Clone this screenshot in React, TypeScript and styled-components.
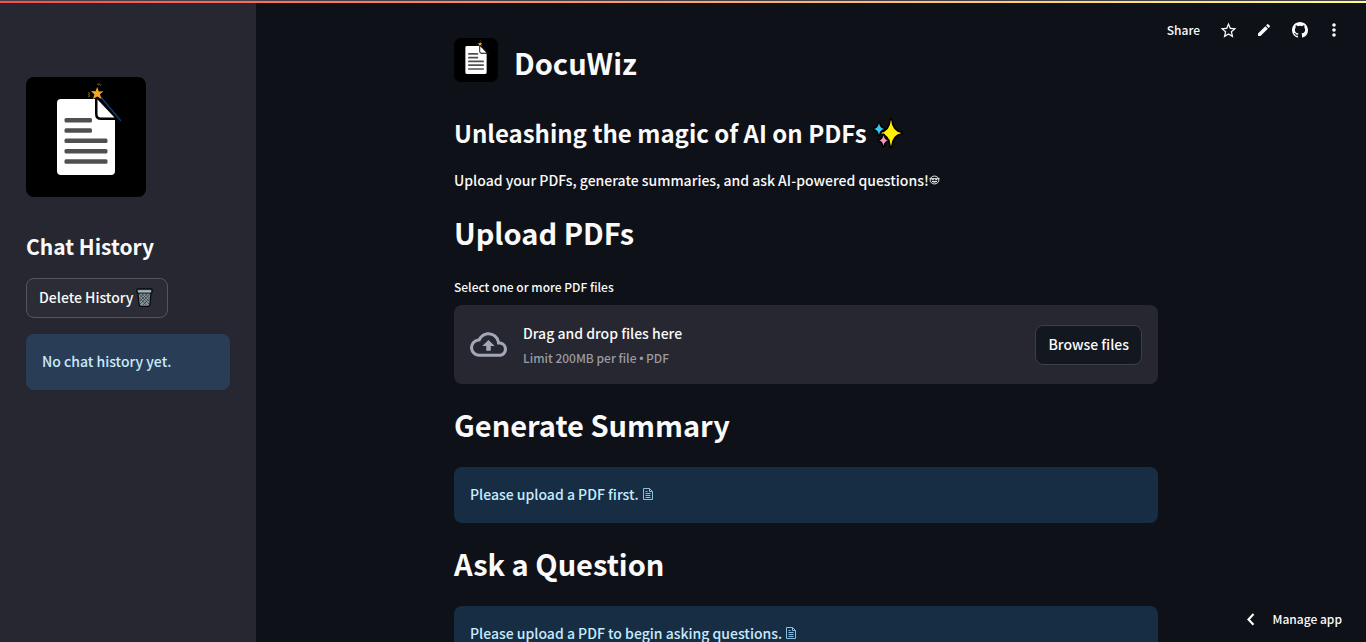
import React from "react";
import styled, { createGlobalStyle } from "styled-components";

const GlobalStyle = createGlobalStyle`
  * { box-sizing: border-box; }
  body {
    margin: 0;
    background: #0e1117;
    color: #fafafa;
    font-family: "Source Sans Pro", "Noto Sans CJK SC", sans-serif;
    font-size: 14px;
    font-weight: 500;
    line-height: 24px;
  }
  h1, h2, p { margin: 0; }
  button { font-family: inherit; font-weight: inherit; color: inherit; cursor: pointer; }
`;

const Page = styled.div`
  position: relative;
  display: flex;
  height: 100vh;
  overflow: hidden;
`;

const Decoration = styled.div`
  position: absolute;
  inset: 0 0 auto;
  height: 3px;
  border-top: 1px solid #40414a;
  background: linear-gradient(90deg, #ff4b4b, #fffd80) padding-box;
  z-index: 2;
`;

const Sidebar = styled.aside`
  flex: none;
  width: 256px;
  padding: 77px 26px 0;
  background: #262730;
`;

const Main = styled.main`
  flex: 1;
  min-width: 0;
  padding: 38px 26px 0 16px;
  overflow: hidden;
`;

const Column = styled.div`
  max-width: 704px;
  margin: 0 auto;
`;

const Logo = styled.svg<{ $size: number }>`
  display: block;
  flex: none;
  width: ${(p) => p.$size}px;
  height: ${(p) => p.$size}px;
`;

const Brand = styled.div`
  display: flex;
  gap: 16px;
`;

const Title = styled.h1`
  padding-bottom: 4px;
  font-size: 29px;
  line-height: 48px;
  font-weight: 700;
`;

const Subtitle = styled.h2`
  display: flex;
  align-items: center;
  gap: 6px;
  margin-top: 22px;
  font-size: 24px;
  line-height: 42px;
  font-weight: 600;
`;

const Section = styled.section`
  margin-top: 16px;
`;

const SidebarTitle = styled.h2`
  margin: 33px 0 16px;
  font-size: 21px;
  line-height: 32px;
  font-weight: 600;
`;

const Intro = styled.p`
  display: flex;
  align-items: center;
  margin-top: 14px;
`;

const Label = styled.label`
  display: block;
  margin-top: 16px;
  font-size: 12px;
  line-height: 22px;
`;

const Button = styled.button<{ $dark?: boolean }>`
  display: flex;
  align-items: center;
  gap: 3px;
  height: 40px;
  padding: 0 12px 2px;
  border: 1px solid ${(p) => (p.$dark ? "#3e4049" : "#54555e")};
  border-radius: 8px;
  background: ${(p) => (p.$dark ? "#131720" : "#2b2c36")};
  font-size: 14px;
  line-height: 24px;
`;

const Alert = styled.div<{ $side?: boolean }>`
  display: flex;
  align-items: center;
  gap: 4px;
  margin-top: ${(p) => (p.$side ? 16 : 15)}px;
  padding: 15px 16px 17px;
  border-radius: 8px;
  background: ${(p) => (p.$side ? "#2a3d56" : "#172d43")};
  color: #c7ebff;
`;

const Dropzone = styled.div`
  display: flex;
  align-items: center;
  margin-top: 7px;
  padding: 14px 16px;
  border-radius: 8px;
  background: #262730;
`;

const DropText = styled.div`
  flex: 1;
  margin-left: 16px;
  padding-top: 2px;
`;

const Hint = styled.div`
  margin-top: 2px;
  color: #9b9ba2;
  font-size: 12px;
  line-height: 22px;
`;

const Bullet = styled.span`
  font-family: "Liberation Sans", sans-serif;
`;

const Toolbar = styled.header`
  position: absolute;
  top: 18px;
  right: 24px;
  display: flex;
  align-items: center;
  gap: 16px;
`;

const ToolButton = styled.button<{ $narrow?: boolean }>`
  display: flex;
  align-items: center;
  justify-content: center;
  min-width: ${(p) => (p.$narrow ? 16 : 20)}px;
  padding: 0;
  border: 0;
  background: none;
  font-size: 12px;
  line-height: 24px;
`;

const ShareButton = styled(ToolButton)`
  padding-right: 2px;
`;

const ManageButton = styled(ToolButton)`
  position: absolute;
  right: 24px;
  bottom: 11px;
  gap: 12px;
`;

const LogoMark = ({ size }: { size: number }) => (
  <Logo $size={size} viewBox="0 0 120 120" role="img" aria-label="DocuWiz">
    <rect width="120" height="120" rx={size > 60 ? 8 : 18} fill="#000" />
    <path d="M35 22h34v15q0 6 6 6h14v51q0 4-4 4H35q-4 0-4-4V26q0-4 4-4Z" fill="#fff" />
    <path d="M71.500 22.500V37q0 3.500 3.500 3.500h13.500Z" fill="#fff" />
    <g fill="#505050">
      <rect x="38.500" y="41" width="27.500" height="4.500" rx="1.500" />
      <rect x="38.500" y="51.300" width="27.500" height="4.500" rx="1.500" />
      <rect x="38.500" y="61.600" width="43" height="4.500" rx="1.500" />
      <rect x="38.500" y="71.900" width="43" height="4.500" rx="1.500" />
      <rect x="38.500" y="82.200" width="43" height="4.500" rx="1.500" />
    </g>
    <path d="m74 19 21 25" stroke="#123f7d" strokeWidth="1.200" />
    <path d="m71.200 10 1.600 4.400 4.700-.2-3.600 3.100 1.600 4.700-4.300-2.600-4.300 2.500 1.500-4.500-3.400-3.300 4.600.1Z" fill="#f9a51f" />
    <path d="m62 15.500 2 1-2 1 2 1.500-2 .8M71 7l1.500 1 .5-1.500 1.500 2 1-1" fill="none" stroke="#8d6c12" strokeWidth=".8" />
  </Logo>
);

const PageIcon = () => (
  <svg width="10" height="12" viewBox="0 0 10 12" fill="none" stroke="#86bfe0" aria-hidden="true">
    <path d="M.5.500h6l3 3v8h-9ZM6.500.500v3h3M2.500 5.500h5M2.500 7.500h5M2.500 9.500h5M2.500 3.500h2" />
  </svg>
);

const TrashIcon = () => (
  <svg width="19" height="19" viewBox="0 0 19 19" aria-hidden="true">
    <path d="M1 1.500 2 1h13l1 .5v3l-1 .8-1.200 11.700-1.300 1.500h-8L3.200 17 2 5.300 1 4.500Z" fill="#84929a" stroke="#08090c" strokeWidth="1.300" />
    <path d="M2.200 3.300h12.600" stroke="#a9b6bc" strokeWidth="1.600" />
    <path d="m3 6 10 10M6 6l7.500 7.500M9.500 6l4 4M3.800 10l6.500 7M14 6 4 16M11 6l-7.200 7.200M7.500 6 3.400 10M13.500 10 7 17" stroke="#39444b" strokeWidth=".8" />
    <path d="M2 5.200h13" stroke="#15191d" />
  </svg>
);

const SparklesIcon = () => (
  <svg width="30" height="30" viewBox="0 0 30 30" stroke="#000" strokeWidth="3.200" strokeLinejoin="round" paintOrder="stroke" aria-hidden="true">
    <path d="M18 1.500q1.200 12 10.500 13.500Q19.200 16.500 18 28.500 16.800 16.500 7.500 15 16.800 13.500 18 1.500Z" fill="#fff000" />
    <path d="M6 5q.8 5 5 6-4.200 1-5 6-.8-5-5-6 4.200-1 5-6Z" fill="#35c9f5" />
    <path d="M10.500 17q.7 4.800 4.500 5.500-3.800.7-4.500 5.500-.7-4.800-4.500-5.500 3.800-.7 4.500-5.500Z" fill="#f59ac0" />
  </svg>
);

const FaceIcon = () => (
  <svg width="11" height="12" viewBox="0 0 12 12" fill="none" stroke="#fafafa" aria-hidden="true">
    <ellipse cx="6" cy="6" rx="4.800" ry="4.300" />
    <path d="M.5 4.500h11M3 5.500h2.200M6.800 5.500H9M3.200 7.500q2.800 1.800 5.600 0Z" />
  </svg>
);

const CloudIcon = () => (
  <svg width="37" height="37" viewBox="0 0 24 24" fill="#a3a8b8" aria-hidden="true">
    <path d="M19.350 10.040A7.490 7.490 0 0 0 12 4C9.110 4 6.600 5.640 5.350 8.040A5.994 5.994 0 0 0 0 14c0 3.310 2.690 6 6 6h13c2.760 0 5-2.240 5-5 0-2.640-2.050-4.780-4.650-4.960ZM19 18H6c-2.210 0-4-1.790-4-4 0-2.050 1.530-3.760 3.560-3.970l1.070-.11.500-.95A5.469 5.469 0 0 1 12 6c2.620 0 4.880 1.860 5.390 4.430l.3 1.500 1.530.11A2.980 2.980 0 0 1 22 15c0 1.650-1.350 3-3 3ZM8 13h2.550v3h2.900v-3H16l-4-4Z" />
  </svg>
);

const StarIcon = () => (
  <svg width="19" height="19" viewBox="0 0 24 24" fill="#fafafa" aria-hidden="true">
    <path d="m22 9.240-7.190-.62L12 2 9.190 8.630 2 9.240l5.460 4.730L5.820 21 12 17.270 18.180 21l-1.630-7.030L22 9.240ZM12 15.400l-3.760 2.270 1-4.280-3.320-2.880 4.380-.38L12 6.100l1.710 4.040 4.380.38-3.320 2.880 1 4.280L12 15.400Z" />
  </svg>
);

const PencilIcon = () => (
  <svg width="16" height="16" viewBox="0 0 24 24" fill="#fafafa" aria-hidden="true">
    <path d="M3 17.250V21h3.750L17.810 9.940l-3.750-3.750L3 17.250ZM20.710 7.040a1 1 0 0 0 0-1.410l-2.340-2.340a1 1 0 0 0-1.410 0l-1.830 1.830 3.750 3.750 1.830-1.830Z" />
  </svg>
);

const GithubIcon = () => (
  <svg width="16" height="16" viewBox="0 0 16 16" fill="#fafafa" aria-hidden="true">
    <path d="M8 0C3.580 0 0 3.580 0 8c0 3.540 2.290 6.530 5.470 7.590.4.070.55-.17.55-.38 0-.19-.01-.82-.01-1.490-2.010.37-2.530-.49-2.690-.94-.09-.23-.48-.94-.82-1.130-.28-.15-.68-.52-.01-.53.63-.01 1.080.58 1.230.82.72 1.210 1.870.87 2.330.66.07-.52.28-.87.51-1.070-1.780-.2-3.640-.89-3.640-3.950 0-.87.31-1.590.82-2.150-.08-.2-.36-1.020.08-2.120 0 0 .67-.21 2.200.82a7.650 7.650 0 0 1 4 0c1.530-1.040 2.200-.82 2.200-.82.44 1.100.16 1.920.08 2.120.51.56.82 1.270.82 2.150 0 3.070-1.870 3.750-3.650 3.950.29.25.54.73.54 1.480 0 1.070-.01 1.930-.01 2.200 0 .21.15.46.55.38A8.010 8.010 0 0 0 16 8c0-4.420-3.580-8-8-8Z" />
  </svg>
);

const DotsIcon = () => (
  <svg width="16" height="16" viewBox="0 0 16 16" fill="#fafafa" aria-hidden="true">
    <circle cx="8" cy="3" r="1.800" />
    <circle cx="8" cy="8" r="1.800" />
    <circle cx="8" cy="13" r="1.800" />
  </svg>
);

const ChevronIcon = () => (
  <svg width="20" height="20" viewBox="0 0 24 24" fill="none" stroke="#fafafa" strokeWidth="2.600" aria-hidden="true">
    <path d="m15 6-6 6.500 6 6.500" />
  </svg>
);

export default function App() {
  return (
    <>
      <GlobalStyle />
      <Page>
        <Decoration />
        <Sidebar>
          <LogoMark size={120} />
          <SidebarTitle>Chat History</SidebarTitle>
          <Button type="button">Delete History <TrashIcon /></Button>
          <Alert $side>No chat history yet.</Alert>
        </Sidebar>
        <Main>
          <Column>
            <Brand>
              <LogoMark size={44} />
              <Title>DocuWiz</Title>
            </Brand>
            <Subtitle>Unleashing the magic of AI on PDFs<SparklesIcon /></Subtitle>
            <Intro>Upload your PDFs, generate summaries, and ask AI-powered questions!<FaceIcon /></Intro>
            <Section>
              <Title as="h2">Upload PDFs</Title>
              <Label htmlFor="browse">Select one or more PDF files</Label>
              <Dropzone>
                <CloudIcon />
                <DropText>
                  <div>Drag and drop files here</div>
                  <Hint>Limit 200MB per file <Bullet>•</Bullet> PDF</Hint>
                </DropText>
                <Button id="browse" type="button" $dark>Browse files</Button>
              </Dropzone>
            </Section>
            <Section>
              <Title as="h2">Generate Summary</Title>
              <Alert>Please upload a PDF first.<PageIcon /></Alert>
            </Section>
            <Section>
              <Title as="h2">Ask a Question</Title>
              <Alert>Please upload a PDF to begin asking questions.<PageIcon /></Alert>
            </Section>
          </Column>
        </Main>
        <Toolbar>
          <ShareButton type="button">Share</ShareButton>
          <ToolButton type="button" aria-label="Favorite"><StarIcon /></ToolButton>
          <ToolButton type="button" aria-label="Edit"><PencilIcon /></ToolButton>
          <ToolButton type="button" aria-label="View on GitHub"><GithubIcon /></ToolButton>
          <ToolButton type="button" $narrow aria-label="More options"><DotsIcon /></ToolButton>
        </Toolbar>
        <ManageButton type="button"><ChevronIcon />Manage app</ManageButton>
      </Page>
    </>
  );
}
